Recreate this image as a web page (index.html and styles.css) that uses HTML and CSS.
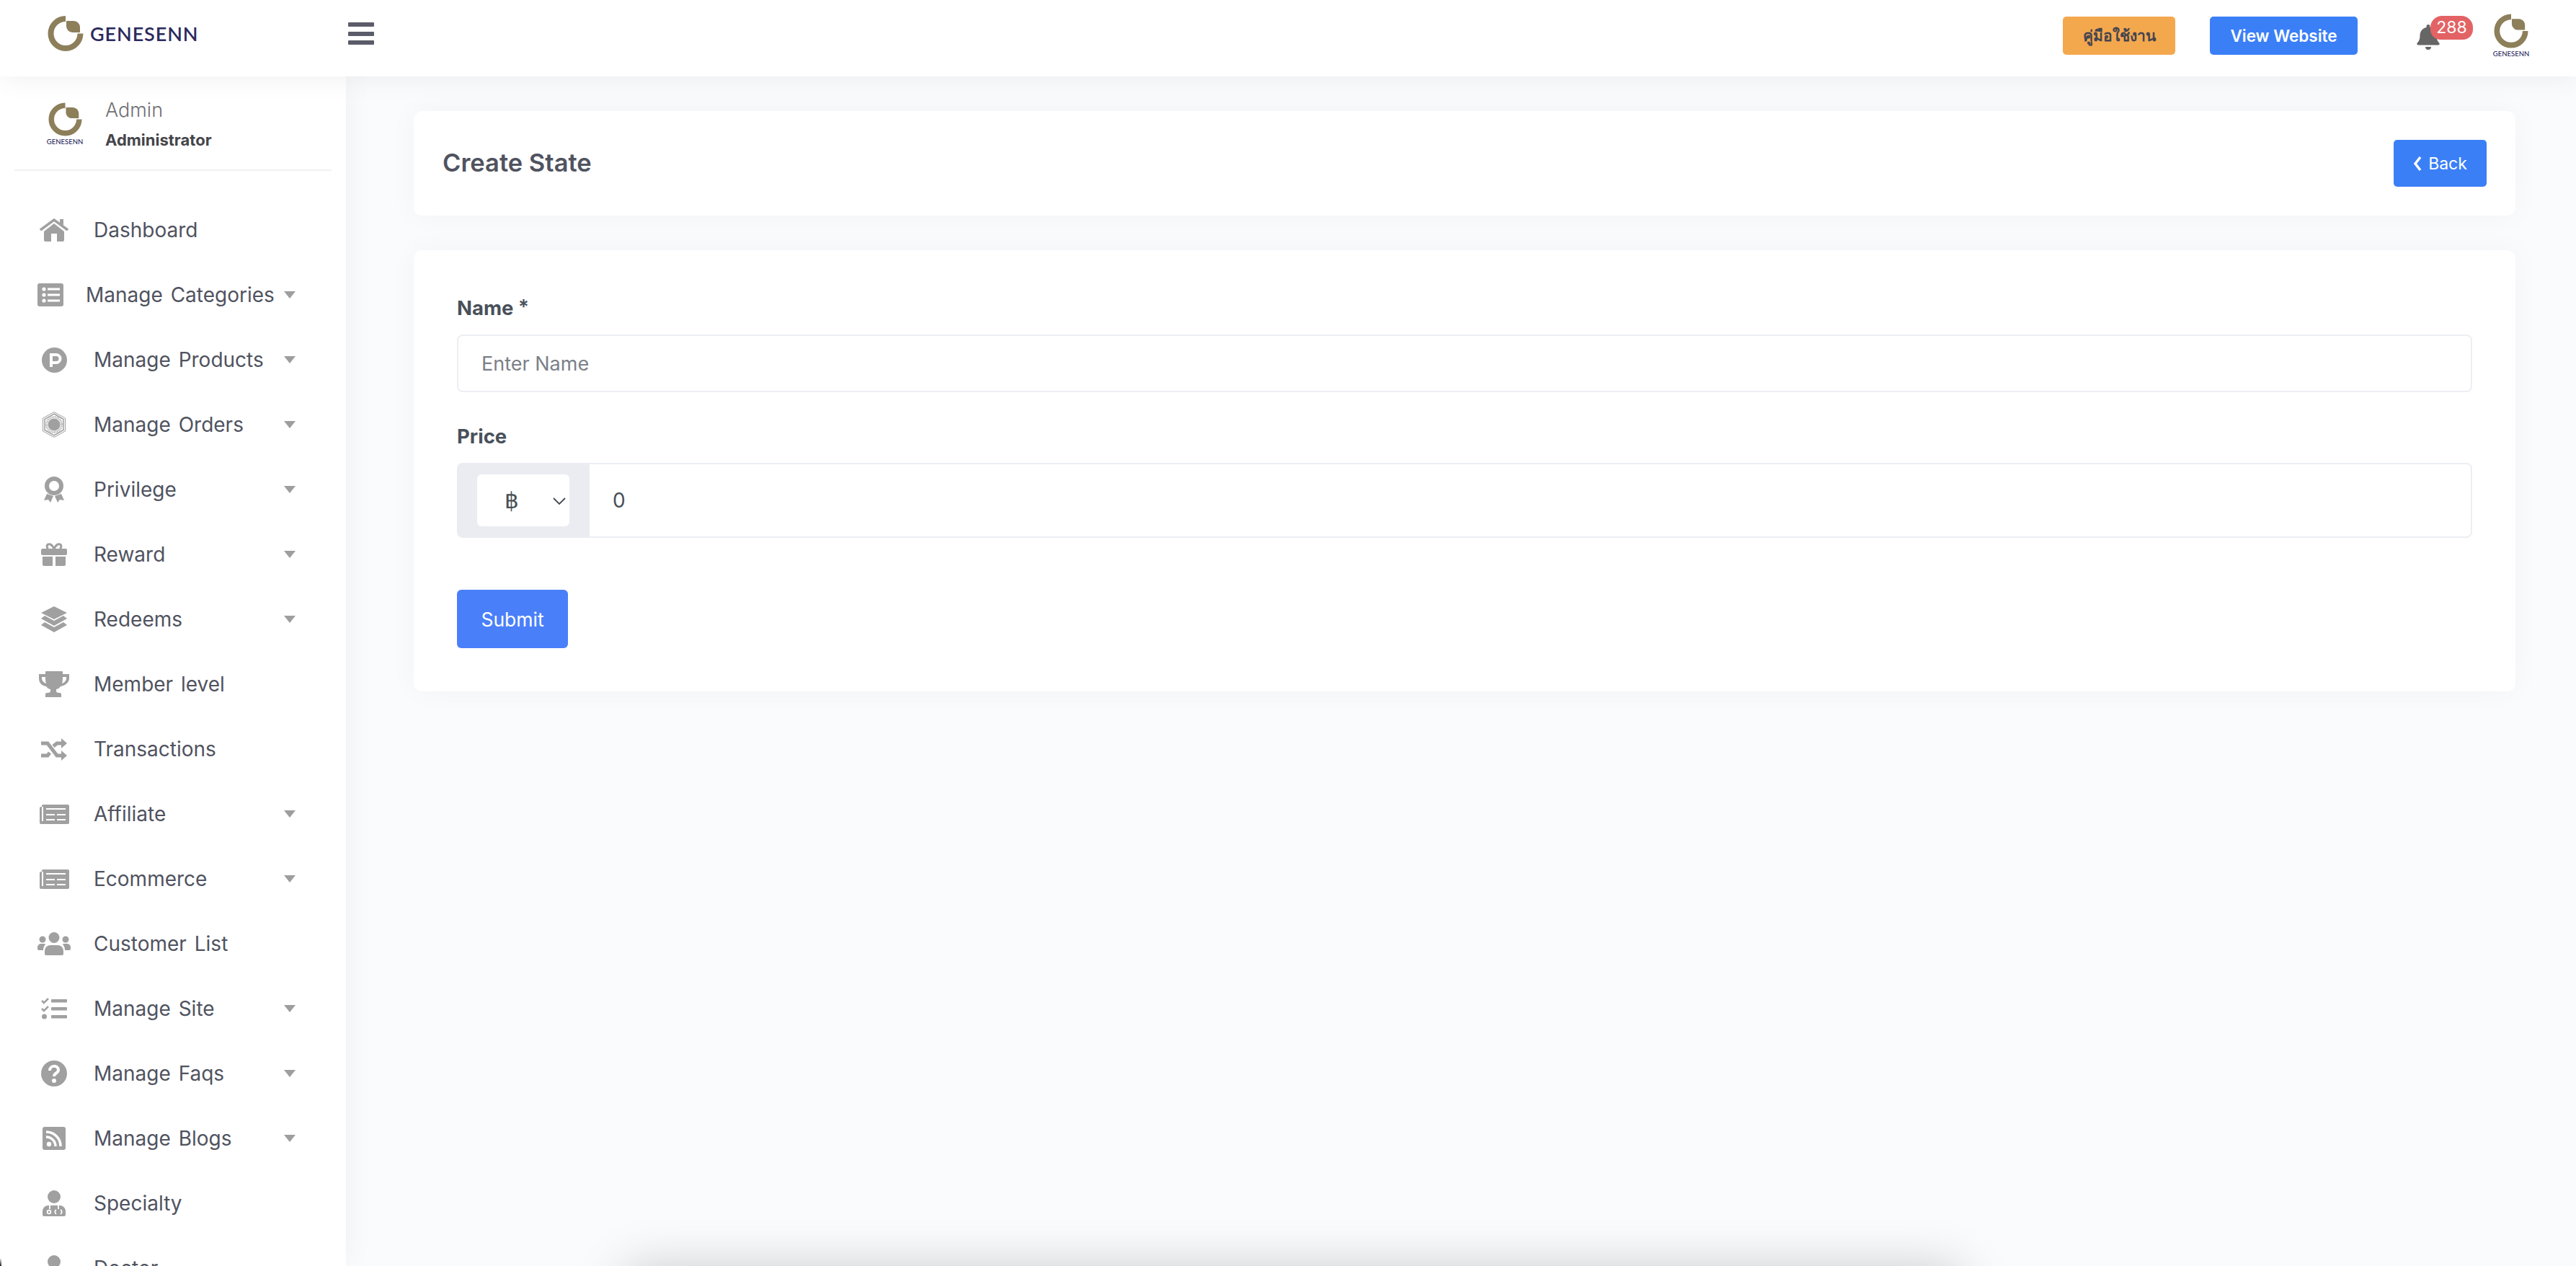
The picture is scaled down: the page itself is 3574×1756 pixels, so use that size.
FILE: index.html
```html
<!DOCTYPE html>
<html lang="en">
<head>
<meta charset="utf-8">
<title>Create State</title>
<link rel="stylesheet" href="styles.css">
</head>
<body>
<div class="app">
  <header class="topbar">
    <a class="brand">
      <svg class="mark" width="50" height="49" viewBox="0 0 50 49"><path d="M25 4A20.500 20.500 0 1 0 45.500 24.500" fill="none" stroke="#8c7f5a" stroke-width="8"/><path d="M26 7H36C41 7 45 11 45 16V23H35C30 23 26 19 26 14Z" fill="#8c7f5a"/></svg>
      <span class="brand-name">GENESENN</span>
    </a>
    <button class="burger"><span></span><span></span><span></span></button>
    <div class="top-actions">
      <a class="btn btn-orange">คู่มือใช้งาน</a>
      <a class="btn btn-blue">View Website</a>
      <div class="bell">
        <svg width="32" height="35" viewBox="0 0 32 35"><path fill="#666" d="M16 35a4 4 0 0 0 4-4h-8a4 4 0 0 0 4 4zM16 0a2.500 2.500 0 0 0-2.500 2.500V4C8 5 4.500 10 4.500 15c0 7-2.500 9-4 11-.5.8 0 2.500 1.500 2.500h28c1.500 0 2-1.700 1.500-2.500-1.500-2-4-4-4-11 0-5-3.500-10-9-11V2.500A2.500 2.500 0 0 0 16 0z"/></svg>
        <span class="badge">288</span>
      </div>
      <div class="stack-logo stack-logo-top">
        <svg width="48" height="48" viewBox="0 0 50 49"><path d="M25 4A20.500 20.500 0 1 0 45.500 24.500" fill="none" stroke="#8c7f5a" stroke-width="8"/><path d="M26 7H36C41 7 45 11 45 16V23H35C30 23 26 19 26 14Z" fill="#8c7f5a"/></svg>
        <span class="stack-name">GENESENN</span>
      </div>
    </div>
  </header>
  <div class="shell">
    <aside class="sidebar">
      <div class="profile">
        <div class="stack-logo">
          <svg width="47" height="47" viewBox="0 0 50 49"><path d="M25 4A20.500 20.500 0 1 0 45.500 24.500" fill="none" stroke="#8c7f5a" stroke-width="8"/><path d="M26 7H36C41 7 45 11 45 16V23H35C30 23 26 19 26 14Z" fill="#8c7f5a"/></svg>
          <span class="stack-name">GENESENN</span>
        </div>
        <div class="profile-text">
          <div class="profile-name">Admin</div>
          <div class="profile-role">Administrator</div>
        </div>
      </div>
      <nav class="nav">
        <a class="nav-row"><span class="nav-icon"><svg width="40" height="32" viewBox="0 0 40 32"><path d="M1 16 20 2l19 14" fill="none" stroke="#a0a0a0" stroke-width="3.500"/><path fill="#a0a0a0" d="M28 1h5v9l-5-4zM6 18 20 7l14 11v12a2 2 0 0 1-2 2h-8V21h-8v11H8a2 2 0 0 1-2-2z"/></svg></span><span class="nav-label">Dashboard</span></a>
        <a class="nav-row"><span class="nav-icon nav-icon-tight"><svg width="36" height="32" viewBox="0 0 36 32"><rect width="36" height="32" rx="3" fill="#a0a0a0"/><g fill="#fff"><circle cx="9" cy="8" r="2.600"/><circle cx="9" cy="16" r="2.600"/><circle cx="9" cy="24" r="2.600"/><rect x="14" y="6.500" width="17" height="3"/><rect x="14" y="14.500" width="17" height="3"/><rect x="14" y="22.500" width="17" height="3"/></g></svg></span><span class="nav-label">Manage Categories</span><i class="caret"></i></a>
        <a class="nav-row"><span class="nav-icon"><svg width="35" height="35" viewBox="0 0 35 35"><circle cx="17.500" cy="17.500" r="17.500" fill="#a0a0a0"/><path d="M13 27V10h7a5.500 5.500 0 0 1 0 11h-7" fill="none" stroke="#fff" stroke-width="4"/></svg></span><span class="nav-label">Manage Products</span><i class="caret"></i></a>
        <a class="nav-row"><span class="nav-icon"><svg width="32" height="36" viewBox="0 0 32 36"><polygon points="16,.5 31.500,9 31.500,27 16,35.500 .5,27 .5,9" fill="none" stroke="#a0a0a0"/><polygon points="16,3 29,10.500 29,25.500 16,33 3,25.500 3,10.500" fill="none" stroke="#a0a0a0" stroke-width="1.500"/><circle cx="16" cy="18" r="10.500" fill="none" stroke="#a0a0a0" stroke-width="3" stroke-dasharray="1 1.200"/><circle cx="16" cy="18" r="8.500" fill="#a0a0a0"/></svg></span><span class="nav-label">Manage Orders</span><i class="caret"></i></a>
        <a class="nav-row"><span class="nav-icon"><svg width="28" height="36" viewBox="0 0 28 36"><circle cx="14" cy="13" r="10" fill="none" stroke="#a0a0a0" stroke-width="6"/><path fill="#a0a0a0" d="M4 24 0 33l6-1 3 4 4-9zM24 24l4 9-6-1-3 4-4-9z"/></svg></span><span class="nav-label">Privilege</span><i class="caret"></i></a>
        <a class="nav-row"><span class="nav-icon"><svg width="36" height="32" viewBox="0 0 36 32"><path d="M18 8C15 2 12 1 10 2c-3 1-2 5 0 6M18 8c3-6 6-7 8-6 3 1 2 5 0 6" fill="none" stroke="#a0a0a0" stroke-width="3"/><rect y="8" width="36" height="9" rx="2" fill="#a0a0a0"/><path fill="#a0a0a0" d="M2 19h14v13H4a2 2 0 0 1-2-2zM20 19h14v11a2 2 0 0 1-2 2H20z"/></svg></span><span class="nav-label">Reward</span><i class="caret"></i></a>
        <a class="nav-row"><span class="nav-icon"><svg width="36" height="36" viewBox="0 0 36 36"><path fill="#a0a0a0" d="M18 0 36 9 18 18 0 9zM5 13l13 7 13-7 5 4-18 10L0 17zM5 22l13 7 13-7 5 4-18 10L0 26z"/></svg></span><span class="nav-label">Redeems</span><i class="caret"></i></a>
        <a class="nav-row"><span class="nav-icon"><svg width="42" height="36" viewBox="0 0 42 36"><path fill="#a0a0a0" fill-rule="evenodd" d="M10 0H32a1 1 0 0 1 1 1v3h9v6c0 5-5 10-12 11-2 3-5 4-6 4v3c0 1 2 2 4 2h1a2 2 0 0 1 2 2v4H9v-4a2 2 0 0 1 2-2h1c2 0 4-1 4-2v-3c-1 0-4-1-6-4C3 20 0 15 0 10V4h9V1a1 1 0 0 1 1-1zM4 8v2c0 3 3 6 6 7-1-3-1-6-1-9zM38 8v2c0 3-3 6-6 7 1-3 1-6 1-9z"/></svg></span><span class="nav-label">Member level</span></a>
        <a class="nav-row"><span class="nav-icon"><svg width="36" height="31" viewBox="0 0 36 31"><path d="M0 7h9l13 17h7M0 24h9l3-4M17 11l5-4h7" fill="none" stroke="#a0a0a0" stroke-width="5"/><path fill="#a0a0a0" d="M28 0l8 7-8 7zM28 17l8 7-8 7z"/></svg></span><span class="nav-label">Transactions</span></a>
        <a class="nav-row"><span class="nav-icon"><svg width="41" height="27" viewBox="0 0 41 27"><rect x="3" width="38" height="27" rx="2" fill="#a0a0a0"/><rect y="3" width="5" height="24" rx="2" fill="#a0a0a0"/><rect x="3" y="3" width="2" height="20" fill="#fff"/><g fill="#fff"><rect x="9" y="5" width="27" height="2"/><rect x="9" y="13" width="12" height="2"/><rect x="24" y="13" width="12" height="2"/><rect x="9" y="20" width="12" height="2"/><rect x="24" y="20" width="12" height="2"/></g></svg></span><span class="nav-label">Affiliate</span><i class="caret"></i></a>
        <a class="nav-row"><span class="nav-icon"><svg width="41" height="27" viewBox="0 0 41 27"><rect x="3" width="38" height="27" rx="2" fill="#a0a0a0"/><rect y="3" width="5" height="24" rx="2" fill="#a0a0a0"/><rect x="3" y="3" width="2" height="20" fill="#fff"/><g fill="#fff"><rect x="9" y="5" width="27" height="2"/><rect x="9" y="13" width="12" height="2"/><rect x="24" y="13" width="12" height="2"/><rect x="9" y="20" width="12" height="2"/><rect x="24" y="20" width="12" height="2"/></g></svg></span><span class="nav-label">Ecommerce</span><i class="caret"></i></a>
        <a class="nav-row"><span class="nav-icon"><svg width="46" height="32" viewBox="0 0 46 32"><g fill="#a0a0a0"><circle cx="23" cy="7.500" r="7.500"/><path d="M10 30v-4a8 8 0 0 1 8-8h10a8 8 0 0 1 8 8v4a2 2 0 0 1-2 2H12a2 2 0 0 1-2-2z"/><circle cx="7" cy="10" r="4.500"/><circle cx="39" cy="10" r="4.500"/><path d="M8 25H2a2 2 0 0 1-2-2v-2a5 5 0 0 1 5-5h5a8 8 0 0 0 1 1 11 11 0 0 0-3 8zM38 25h6a2 2 0 0 0 2-2v-2a5 5 0 0 0-5-5h-5a8 8 0 0 1-1 1 11 11 0 0 1 3 8z"/></g></svg></span><span class="nav-label">Customer List</span></a>
        <a class="nav-row"><span class="nav-icon"><svg width="36" height="30" viewBox="0 0 36 30"><path d="M1 4l3 3 6-6M1 15l3 3 6-6" fill="none" stroke="#a0a0a0" stroke-width="2.500"/><circle cx="4.500" cy="26" r="3.500" fill="#a0a0a0"/><g fill="#a0a0a0"><rect x="14" y="2" width="22" height="4.500" rx="1"/><rect x="14" y="13" width="22" height="4.500" rx="1"/><rect x="14" y="24" width="22" height="4.500" rx="1"/></g></svg></span><span class="nav-label">Manage Site</span><i class="caret"></i></a>
        <a class="nav-row"><span class="nav-icon"><svg width="36" height="36" viewBox="0 0 36 36"><circle cx="18" cy="18" r="18" fill="#a0a0a0"/><path d="M12 14c0-8 12-8 12-1 0 5-6 4-6 9" fill="none" stroke="#fff" stroke-width="4"/><circle cx="18" cy="28" r="3" fill="#fff"/></svg></span><span class="nav-label">Manage Faqs</span><i class="caret"></i></a>
        <a class="nav-row"><span class="nav-icon"><svg width="32" height="32" viewBox="0 0 32 32"><rect width="32" height="32" rx="3" fill="#a0a0a0"/><circle cx="9" cy="24" r="3.200" fill="#fff"/><path d="M5 14a13 13 0 0 1 13 13M5 7a20 20 0 0 1 20 20" fill="none" stroke="#fff" stroke-width="3.500"/></svg></span><span class="nav-label">Manage Blogs</span><i class="caret"></i></a>
        <a class="nav-row"><span class="nav-icon"><svg width="32" height="36" viewBox="0 0 32 36"><g fill="#a0a0a0"><circle cx="16" cy="9" r="9"/><path d="M0 28a8 8 0 0 1 8-7h16a8 8 0 0 1 8 7v6a2 2 0 0 1-2 2H2a2 2 0 0 1-2-2z"/></g><g fill="none" stroke="#fff" stroke-width="1.800"><path d="M10 21v5M22 21v5"/><circle cx="9" cy="30" r="2.400"/><path d="M19 33a3.500 3.500 0 0 1 0-6M25 27a3.500 3.500 0 0 1 0 6"/></g></svg></span><span class="nav-label">Specialty</span></a>
        <a class="nav-row"><span class="nav-icon"><svg width="32" height="36" viewBox="0 0 32 36"><g fill="#a0a0a0"><circle cx="16" cy="9" r="9"/><path d="M0 28a8 8 0 0 1 8-7h16a8 8 0 0 1 8 7v6a2 2 0 0 1-2 2H2a2 2 0 0 1-2-2z"/></g></svg></span><span class="nav-label">Doctor</span></a>
      </nav>
    </aside>
    <main class="content">
      <section class="card card-head">
        <h1 class="page-title">Create State</h1>
        <a class="btn btn-back"><svg width="12" height="22" viewBox="0 0 12 22"><path d="M10 2 3 11l7 9" fill="none" stroke="#fff" stroke-width="3.500"/></svg>Back</a>
      </section>
      <section class="card card-form">
        <label class="field-label">Name <span class="req">*</span></label>
        <input class="text-input" type="text" placeholder="Enter Name">
        <label class="field-label field-label-next">Price</label>
        <div class="input-group">
          <div class="prepend">
            <div class="select-wrap">
              <select class="currency"><option>฿</option></select>
              <svg class="chevron" width="18" height="12" viewBox="0 0 18 12"><path d="M1 2l8 8 8-8" fill="none" stroke="#444b52" stroke-width="1.800"/></svg>
            </div>
          </div>
          <input class="price-input" type="text" value="0">
        </div>
        <button class="submit">Submit</button>
      </section>
    </main>
  </div>
  <div class="offscreen-panel"></div>
  <div class="corner-mark"></div>
</div>
</body>
</html>
```

FILE: styles.css
```css
* { box-sizing: border-box; }
html, body { margin: 0; height: 100%; }
body {
  background: #fafbfd;
  font-family: "Inter", "Noto Sans", sans-serif;
  color: #50535f;
  overflow: hidden;
}
.app { position: relative; height: 100vh; overflow: hidden; display: flex; flex-direction: column; }

.topbar {
  position: relative;
  z-index: 3;
  flex: 0 0 106px;
  display: flex;
  align-items: center;
  background: #fff;
  padding: 0 66px;
  box-shadow: 0 0 40px rgba(0, 0, 0, .07);
}
.brand { display: flex; align-items: center; width: 417px; height: 49px; margin-top: -13px; }
.mark { flex: none; }
.brand-name {
  margin-left: 9px;
  font: 600 27px/1 "Lato", sans-serif;
  letter-spacing: .9px;
  color: #2b2a5e;
}
.burger {
  width: 36px; height: 31px; padding: 0; border: 0; background: none;
  display: flex; flex-direction: column; justify-content: space-between;
  margin-top: -13px;
}
.burger span { display: block; height: 6px; border-radius: 1px; background: #5b5c69; }
.top-actions { margin-left: auto; display: flex; align-items: center; margin-top: -8px; }
.btn {
  display: flex; align-items: center; justify-content: center;
  border-radius: 5px; font-size: 22.500px; font-weight: 600;
}
.btn-orange { width: 156px; height: 53px; background: #f4a84e; color: #45454f; font-size: 21px; }
.btn-blue { width: 205px; height: 53px; margin-left: 48px; background: #3b7ff7; color: #fff; }
.bell { position: relative; width: 32px; height: 35px; margin-left: 82px; margin-top: 5px; }
.bell svg { display: block; }
.badge {
  position: absolute; left: 19px; top: -12px;
  width: 59px; height: 33px; border-radius: 16px 16px 14px 14px;
  background: #e36365; color: #fff;
  font-size: 23px; line-height: 33px; text-align: center;
}
.stack-logo { display: flex; flex-direction: column; align-items: center; width: 48px; flex: none; }
.stack-logo-top { margin-left: 75px; }
.stack-name { font: 500 9.500px/1 "Lato", sans-serif; color: #2b2a5e; margin-top: 3px; white-space: nowrap; }

.shell { flex: 1; display: flex; min-height: 0; }
.sidebar {
  position: relative; z-index: 2;
  flex: 0 0 480px;
  background: #fff;
  box-shadow: 0 0 40px rgba(0, 0, 0, .05);
  overflow: hidden;
}
.profile {
  display: flex; align-items: flex-start;
  height: 131px; margin: 0 20px; padding: 36px 0 0 46px;
  border-bottom: 2px solid #f1f1f1;
}
.profile-text { margin-left: 32px; margin-top: -6px; }
.profile-name { font-size: 27px; line-height: 34px; font-weight: 300; color: #6f7074; }
.profile-role { font-size: 22px; line-height: 30px; font-weight: 700; color: #45454a; margin-top: 9px; }
.nav { padding-top: 37px; }
.nav-row {
  display: flex; align-items: center;
  height: 90px; padding: 0 70px 0 52px;
}
.nav-icon { flex: none; width: 46px; margin-right: 32px; display: flex; justify-content: center; }
.nav-icon svg { display: block; }
.nav-icon-tight { width: 36px; margin-right: 31px; }
.nav-label { font-size: 28px; font-weight: 400; color: #50535f; white-space: nowrap; word-spacing: 3px; }
.caret {
  margin-left: auto; width: 0; height: 0;
  border-left: 8px solid transparent; border-right: 8px solid transparent;
  border-top: 10px solid #9e9e9e;
}

.content { flex: 1; min-width: 0; padding: 48px 84px 0 94px; }
.card { background: #fff; border-radius: 12px; box-shadow: 0 0 40px rgba(0, 0, 0, .035); }
.card-head {
  display: flex; align-items: center; justify-content: space-between;
  height: 145px; padding: 0 40px;
}
.page-title { margin: -3px 0 0; font-size: 34.500px; font-weight: 600; color: #50535f; }
.btn-back { width: 129px; height: 65px; background: #3b7ff7; color: #fff; font-weight: 400; font-size: 23px; gap: 9px; }
.card-form { margin-top: 48px; padding: 60px 60px 60px; height: 612px; }
.field-label { display: block; font-size: 27.500px; line-height: 40px; font-weight: 700; color: #48505a; margin-bottom: 17px; }
.req { position: relative; top: -2px; font-weight: 600; }
.field-label-next { margin-top: 41px; }
.text-input {
  display: block; width: 100%; height: 80px; padding: 0 32px 0;
  border: 2px solid #eceef3; border-radius: 8px; outline: 0;
  font: 400 27px "Inter", sans-serif; color: #495057;
}
.text-input::placeholder { color: #7b8088; opacity: 1; }
.input-group { display: flex; height: 104px; }
.prepend {
  flex: 0 0 184px; display: flex; align-items: center; padding-left: 28px;
  background: #ebecf1; border-radius: 8px 0 0 8px;
}
.select-wrap { position: relative; width: 128px; height: 72px; }
.currency {
  appearance: none; -webkit-appearance: none;
  width: 100%; height: 100%; padding: 0 0 0 38px;
  background: #fff; border: 0; border-radius: 6px;
  font: 400 31px "DejaVu Sans", sans-serif; color: #495057;
}
.chevron { position: absolute; right: 5px; top: 31px; }
.price-input {
  flex: 1; min-width: 0; height: 100%; padding: 0 32px;
  border: 2px solid #eceef3; border-left: 0; border-radius: 0 8px 8px 0; outline: 0;
  font: 400 28px "Inter", sans-serif; color: #495057;
}
.submit {
  display: block; width: 154px; height: 81px; margin-top: 72px; padding: 0;
  border: 0; border-radius: 6px; background: #4a7ffa; color: #fff;
  font: 400 26.500px "Inter", sans-serif;
}
.offscreen-panel {
  position: absolute; left: 868px; width: 1852px; top: 1762px; height: 100px;
  background: #fff;
  box-shadow: 0 0 70px rgba(0, 0, 0, .22);
}
.corner-mark {
  position: absolute; z-index: 4; left: 0; bottom: 0; width: 2px; height: 11px;
  background: linear-gradient(#fff, #222);
}
```
